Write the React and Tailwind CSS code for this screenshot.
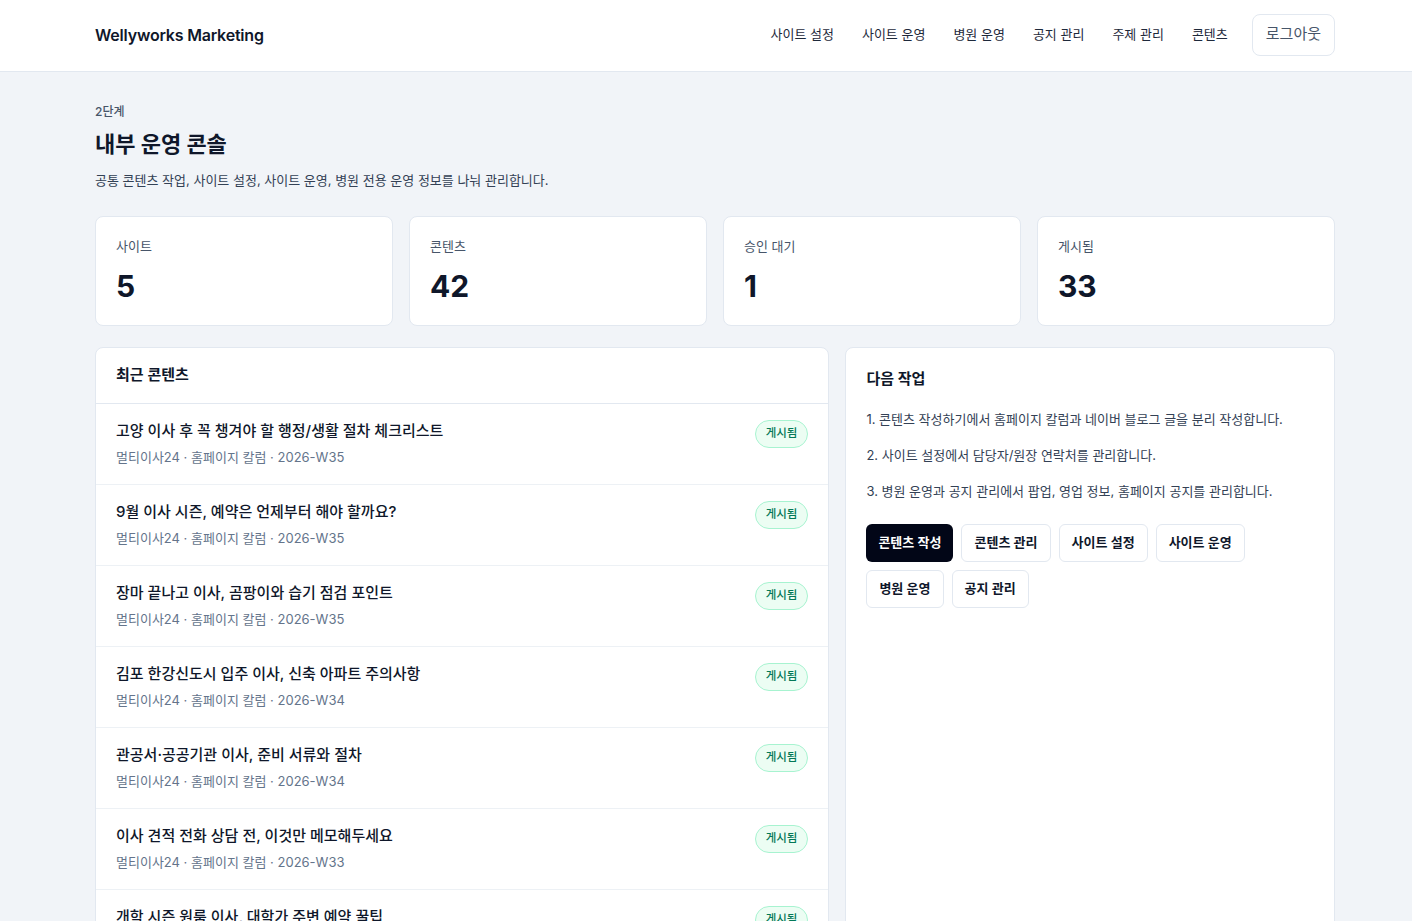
const nav = ["사이트 설정", "사이트 운영", "병원 운영", "공지 관리", "주제 관리", "콘텐츠"];

const stats = [
  { label: "사이트", value: "5" },
  { label: "콘텐츠", value: "42" },
  { label: "승인 대기", value: "1" },
  { label: "게시됨", value: "33" },
];

const posts = [
  { title: "고양 이사 후 꼭 챙겨야 할 행정/생활 절차 체크리스트", week: "2026-W35" },
  { title: "9월 이사 시즌, 예약은 언제부터 해야 할까요?", week: "2026-W35" },
  { title: "장마 끝나고 이사, 곰팡이와 습기 점검 포인트", week: "2026-W35" },
  { title: "김포 한강신도시 입주 이사, 신축 아파트 주의사항", week: "2026-W34" },
  { title: "관공서·공공기관 이사, 준비 서류와 절차", week: "2026-W34" },
  { title: "이사 견적 전화 상담 전, 이것만 메모해두세요", week: "2026-W33" },
  { title: "개학 시즌 원룸 이사, 대학가 주변 예약 꿀팁", week: "2026-W33" },
];

const steps = [
  "1. 콘텐츠 작성하기에서 홈페이지 칼럼과 네이버 블로그 글을 분리 작성합니다.",
  "2. 사이트 설정에서 담당자/원장 연락처를 관리합니다.",
  "3. 병원 운영과 공지 관리에서 팝업, 영업 정보, 홈페이지 공지를 관리합니다.",
];

const actions = ["콘텐츠 작성", "콘텐츠 관리", "사이트 설정", "사이트 운영", "병원 운영", "공지 관리"];

export default function App() {
  return (
    <div className="min-h-screen bg-[#f1f4f8] font-['Inter','Noto_Sans_CJK_KR',sans-serif] text-[#0f172a]">
      {/* 상단 헤더 */}
      <header className="bg-white border-b border-[#e2e8f0]">
        <div className="pl-[95px] pr-[77px] h-[71px] pb-[2px] flex items-center justify-between">
          <div className="text-[16px] font-semibold tracking-[-0.2px]">Wellyworks Marketing</div>
          <nav className="flex items-center">
            <div className="flex items-center gap-[28px] mr-[24px]">
              {nav.map((item) => (
                <a key={item} className="text-[13px] text-[#1e293b]">
                  {item}
                </a>
              ))}
            </div>
            <button className="h-[42px] px-[13px] rounded-lg border border-[#e2e8f0] text-[15px] text-[#475569] bg-white">
              로그아웃
            </button>
          </nav>
        </div>
      </header>

      <main className="pl-[95px] pr-[77px] pt-[30px]">
        <div className="text-[12px] font-medium text-[#475569] leading-[20px]">2단계</div>
        <h1 className="mt-[7px] text-[22px] font-bold leading-[30px]">내부 운영 콘솔</h1>
        <p className="mt-[10px] text-[13px] text-[#334155] leading-[22px]">
          공통 콘텐츠 작업, 사이트 설정, 사이트 운영, 병원 전용 운영 정보를 나눠 관리합니다.
        </p>

        {/* 통계 카드 */}
        <div className="mt-[25px] grid grid-cols-4 gap-[16px]">
          {stats.map((s) => (
            <div key={s.label} className="h-[110px] bg-white border border-[#e2e8f0] rounded-lg px-[20px] pt-[19px]">
              <div className="text-[13px] text-[#475569] leading-[20px]">{s.label}</div>
              <div className="mt-[12px] text-[30px] font-bold leading-[36px]">{s.value}</div>
            </div>
          ))}
        </div>

        <div className="mt-[21px] grid grid-cols-[3fr_2fr] gap-[16px] items-start">
          {/* 최근 콘텐츠 */}
          <section className="bg-white border border-[#e2e8f0] rounded-lg overflow-hidden">
            <div className="h-[56px] flex items-center px-[20px] border-b border-[#e2e8f0]">
              <h2 className="text-[15px] font-semibold">최근 콘텐츠</h2>
            </div>
            <ul>
              {posts.map((p) => (
                <li key={p.title} className="h-[81px] flex items-start justify-between px-[20px] pt-[15px] border-b border-[#edf1f5]">
                  <div>
                    <div className="text-[15px] font-medium leading-[24px] text-[#0f172a]">{p.title}</div>
                    <div className="mt-[4px] text-[13px] text-[#64748b] leading-[20px]">
                      멀티이사24 · 홈페이지 칼럼 · {p.week}
                    </div>
                  </div>
                  <span className="mt-[1px] h-[28px] px-[10px] flex items-center rounded-full bg-[#ecfdf3] border border-[#a7f3d0] text-[11.5px] font-medium text-[#047857]">
                    게시됨
                  </span>
                </li>
              ))}
            </ul>
          </section>

          {/* 다음 작업 */}
          <section className="bg-white border border-[#e2e8f0] rounded-lg px-[20px] pt-[20px] min-h-[600px]">
            <h2 className="text-[15px] font-semibold leading-[22px]">다음 작업</h2>
            <ol className="mt-[18px] flex flex-col gap-[14px]">
              {steps.map((s) => (
                <li key={s} className="text-[13px] text-[#334155] leading-[22px]">
                  {s}
                </li>
              ))}
            </ol>
            <div className="mt-[22px] flex flex-wrap gap-[8px] w-[400px]">
              {actions.map((a, i) => (
                <button
                  key={a}
                  className={
                    i === 0
                      ? "h-[38px] px-[12px] rounded-md bg-[#020617] text-white text-[13px] font-semibold"
                      : "h-[38px] px-[12px] rounded-md bg-white border border-[#e2e8f0] text-[13px] font-semibold text-[#0f172a]"
                  }
                >
                  {a}
                </button>
              ))}
            </div>
          </section>
        </div>
      </main>
    </div>
  );
}
